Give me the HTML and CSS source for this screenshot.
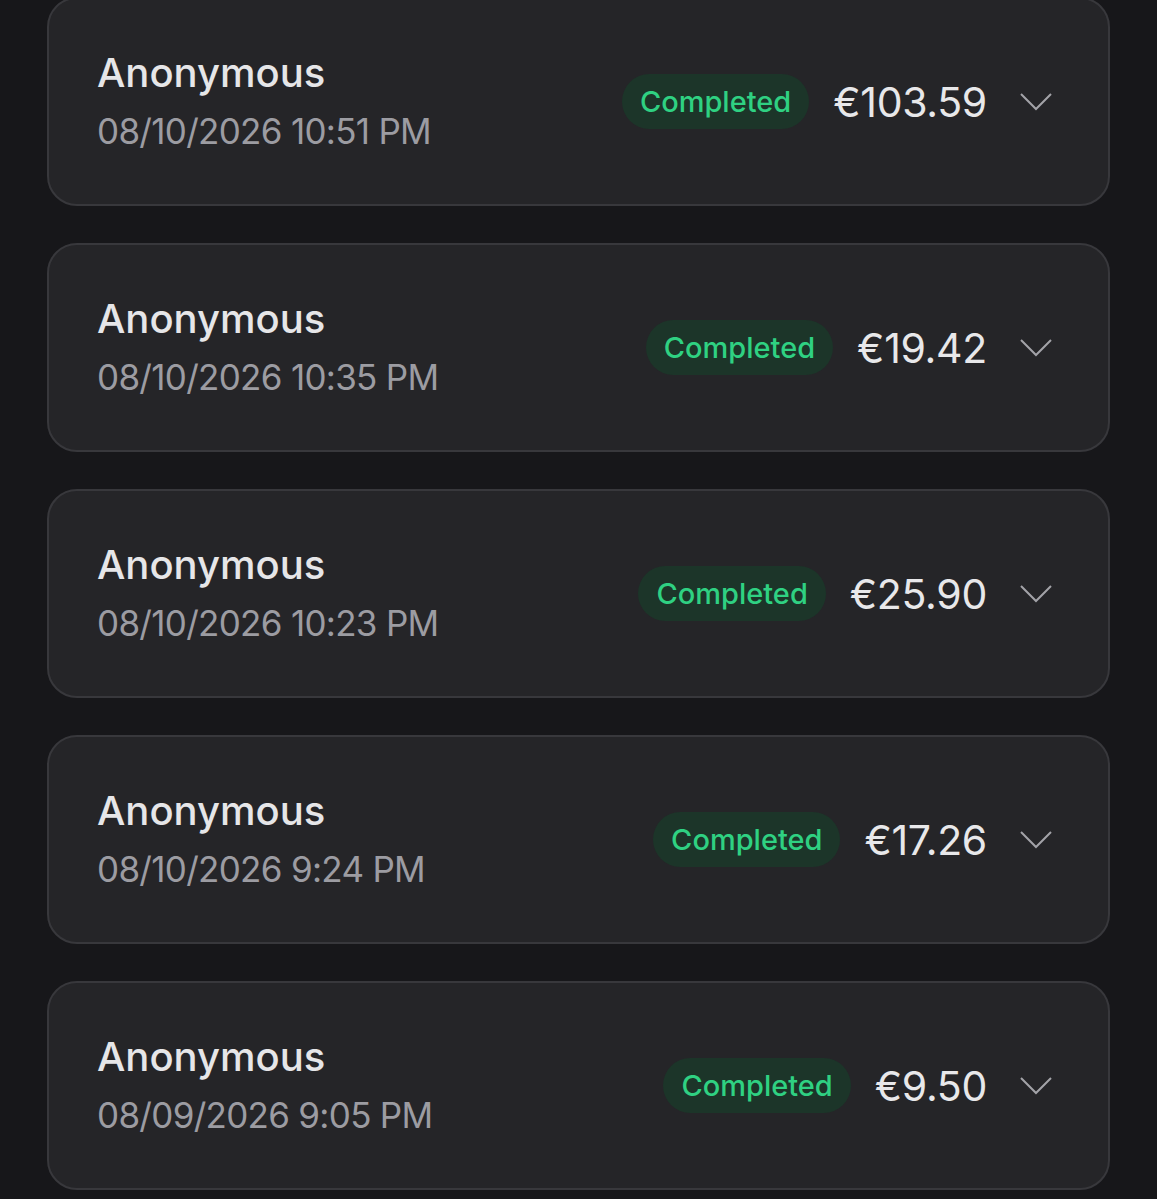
FILE: index.html
```html
<!DOCTYPE html>
<html lang="en">

<head>
  <meta charset="utf-8">
  <title>Transactions</title>
  <link rel="stylesheet" href="styles.css">
</head>

<body>
  <div class="list">
    <!-- transaction rows -->
    <div class="card">
      <div class="info">
        <div class="name">Anonymous</div>
        <div class="date">08/10/2026 10:51 PM</div>
      </div>
      <div class="side">
        <span class="badge">Completed</span>
        <span class="amount">€103.59</span>
        <svg class="chevron" viewBox="0 0 32 18"><path d="M1 1 L16 16 L31 1"/></svg>
      </div>
    </div>
    <div class="card">
      <div class="info">
        <div class="name">Anonymous</div>
        <div class="date">08/10/2026 10:35 PM</div>
      </div>
      <div class="side">
        <span class="badge">Completed</span>
        <span class="amount">€19.42</span>
        <svg class="chevron" viewBox="0 0 32 18"><path d="M1 1 L16 16 L31 1"/></svg>
      </div>
    </div>
    <div class="card">
      <div class="info">
        <div class="name">Anonymous</div>
        <div class="date">08/10/2026 10:23 PM</div>
      </div>
      <div class="side">
        <span class="badge">Completed</span>
        <span class="amount">€25.90</span>
        <svg class="chevron" viewBox="0 0 32 18"><path d="M1 1 L16 16 L31 1"/></svg>
      </div>
    </div>
    <div class="card">
      <div class="info">
        <div class="name">Anonymous</div>
        <div class="date">08/10/2026 9:24 PM</div>
      </div>
      <div class="side">
        <span class="badge">Completed</span>
        <span class="amount">€17.26</span>
        <svg class="chevron" viewBox="0 0 32 18"><path d="M1 1 L16 16 L31 1"/></svg>
      </div>
    </div>
    <div class="card">
      <div class="info">
        <div class="name">Anonymous</div>
        <div class="date">08/09/2026 9:05 PM</div>
      </div>
      <div class="side">
        <span class="badge">Completed</span>
        <span class="amount">€9.50</span>
        <svg class="chevron" viewBox="0 0 32 18"><path d="M1 1 L16 16 L31 1"/></svg>
      </div>
    </div>
  </div>
</body>

</html>
```

FILE: styles.css
```css
body {
  margin: 0;
  background-color: #17171a;
  font-family: Inter, "Noto Sans", sans-serif;
}

.list {
  display: flex;
  flex-direction: column;
  gap: 37px;
  margin-top: -3px;
  padding: 0 47px;
}

.card {
  box-sizing: border-box;
  height: 209px;
  display: flex;
  align-items: center;
  justify-content: space-between;
  padding: 0 56px 0 48px;
  background-color: #252528;
  border: 2px solid #38383c;
  border-radius: 30px;
}

.name {
  font-size: 40px;
  font-weight: 500;
  color: #e6e6e8;
  line-height: 58px;
}

.date {
  font-size: 35px;
  letter-spacing: -0.7px;
  color: #9c9ca2;
  line-height: 58px;
}

.side {
  display: flex;
  align-items: center;
}

.badge {
  padding: 0 18px;
  height: 55px;
  line-height: 55px;
  border-radius: 28px;
  background-color: #1c3529;
  color: #2fd182;
  font-size: 29px;
  font-weight: 500;
}

.amount {
  margin-left: 24px;
  font-size: 41px;
  letter-spacing: -0.3px;
  color: #e8e8ea;
}

.chevron {
  margin-left: 33px;
  width: 32px;
  height: 18px;
  fill: none;
  stroke: #a3a3a8;
  stroke-width: 2;
}
```
